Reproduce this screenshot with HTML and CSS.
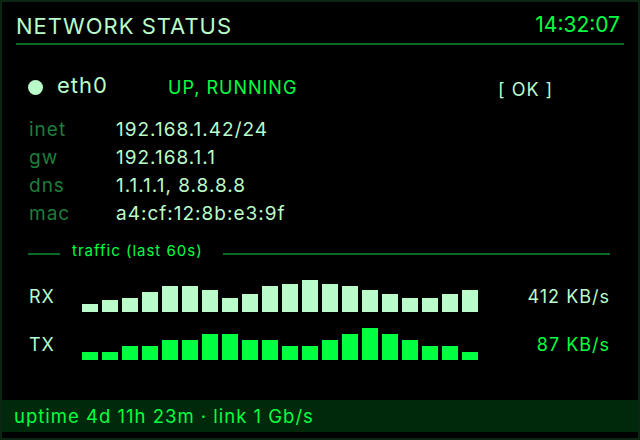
FILE: index.html
```html
<!DOCTYPE html>
<html lang="en">
<head>
  <meta charset="UTF-8">
  <meta name="viewport" content="width=device-width, initial-scale=1.0">
  <title>Network Status</title>
  <link rel="stylesheet" href="styles.css">
</head>
<body>
  <div class="screen">
    <!-- 標題列 -->
    <header class="topbar">
      <h1 class="title">NETWORK STATUS</h1>
      <span class="clock">14:32:07</span>
    </header>

    <main class="panel">
      <!-- 介面狀態 -->
      <div class="iface-row">
        <span class="dot"></span>
        <span class="iface">eth0</span>
        <span class="state">UP, RUNNING</span>
        <span class="ok">[ OK ]</span>
      </div>

      <dl class="details">
        <dt>inet</dt><dd>192.168.1.42/24</dd>
        <dt>gw</dt><dd>192.168.1.1</dd>
        <dt>dns</dt><dd>1.1.1.1, 8.8.8.8</dd>
        <dt>mac</dt><dd>a4:cf:12:8b:e3:9f</dd>
      </dl>

      <div class="divider">
        <span class="rule short"></span>
        <span class="divider-label">traffic (last 60s)</span>
        <span class="rule"></span>
      </div>

      <!-- 流量長條 -->
      <div class="traffic-row rx">
        <span class="dir">RX</span>
        <div class="bars" id="rxBars"></div>
        <span class="rate">412 KB/s</span>
      </div>
      <div class="traffic-row tx">
        <span class="dir">TX</span>
        <div class="bars" id="txBars"></div>
        <span class="rate">87 KB/s</span>
      </div>
    </main>

    <footer class="statusbar">uptime 4d 11h 23m · link 1 Gb/s</footer>
  </div>

  <script>
    // 最近 20 筆取樣（像素高度）
    const rx = [8, 12, 14, 20, 26, 26, 22, 14, 18, 26, 28, 32, 28, 26, 22, 18, 14, 14, 18, 22];
    const tx = [8, 8, 14, 14, 20, 20, 26, 26, 20, 20, 14, 14, 20, 26, 32, 26, 20, 14, 14, 8];

    function drawBars(id, samples) {
      const box = document.getElementById(id);
      samples.forEach(h => {
        const bar = document.createElement('span');
        bar.className = 'bar';
        bar.style.height = h + 'px';
        box.appendChild(bar);
      });
    }

    drawBars('rxBars', rx);
    drawBars('txBars', tx);
  </script>
</body>
</html>
```

FILE: styles.css
```css
/* 終端機風格的網路狀態面板 */
* {
  box-sizing: border-box;
}

body {
  margin: 0;
  background: #000;
  font-family: 'Inter', 'Liberation Sans', sans-serif;
  letter-spacing: 1px;
  color: #b9fcc9;
}

.screen {
  width: 640px;
  height: 440px;
  border: 2px solid #0b2714;
  background: #000;
  display: flex;
  flex-direction: column;
  padding-bottom: 6px;
}

.topbar {
  margin: 0 14px;
  padding: 10px 4px 3px 0;
  border-bottom: 2px solid #0b6b22;
  display: flex;
  justify-content: space-between;
  align-items: flex-start;
}

.title {
  margin: 0;
  font-size: 22px;
  font-weight: normal;
  line-height: 28px;
}

.clock {
  font-size: 21px;
  line-height: 28px;
  letter-spacing: 0;
  margin-top: -1px;
  color: #00ff41;
}

.panel {
  padding: 0 28px 0 26px;
}

.iface-row {
  margin-top: 31px;
  height: 24px;
  display: flex;
  align-items: flex-start;
  line-height: 24px;
}

.dot {
  width: 15px;
  height: 15px;
  margin: 4px 14px 0 0;
  border-radius: 50%;
  background: #b9fcc9;
}

.iface {
  width: 111px;
  margin-top: -3px;
  font-size: 22px;
}

.state {
  width: 330px;
  font-size: 18px;
  color: #00ff41;
}

.ok {
  margin-top: 2px;
  font-size: 18px;
}

.details {
  margin: 16px 0 0 1px;
  display: grid;
  grid-template-columns: 87px 1fr;
  font-size: 19px;
  line-height: 28px;
}

.details dt {
  color: #1f7d3b;
}

.details dd {
  margin: 0;
}

.divider {
  margin-top: 13px;
  display: flex;
  align-items: center;
  line-height: 20px;
}

.rule {
  flex: 1;
  height: 2px;
  margin-top: 5px;
  background: #0b6b22;
}

.rule.short {
  flex: 0 0 32px;
}

.divider-label {
  margin: 0 20px 0 12px;
  font-size: 15px;
  color: #00ff41;
}

.traffic-row {
  margin-top: 11px;
  height: 40px;
  display: flex;
  align-items: flex-end;
  line-height: 24px;
}

.traffic-row.tx {
  margin-top: 8px;
}

.dir {
  width: 54px;
  padding: 0 0 3px 1px;
  font-size: 18px;
}

.bars {
  display: flex;
  align-items: flex-end;
  gap: 4px;
  height: 40px;
}

.bar {
  width: 16px;
  background: #b9fcc9;
}

.tx .bar {
  background: #00ff41;
}

.rate {
  flex: 1;
  padding-bottom: 3px;
  text-align: right;
  font-size: 18px;
}

.tx .rate {
  color: #00ff41;
}

.statusbar {
  margin-top: auto;
  height: 32px;
  padding: 0 12px;
  background: #00280b;
  color: #00ff41;
  font-size: 18.5px;
  line-height: 32px;
}
```
